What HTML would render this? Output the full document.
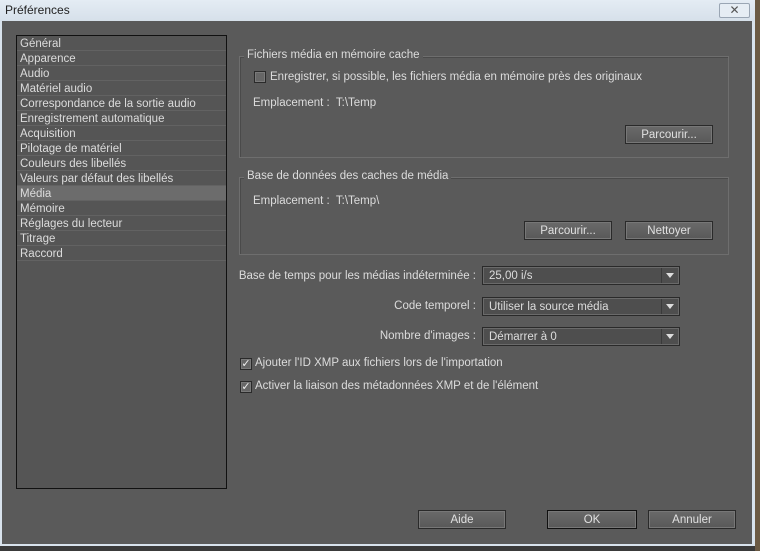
<!DOCTYPE html>
<html><head><meta charset="utf-8"><style>
*{box-sizing:border-box;margin:0;padding:0}
body{width:760px;height:551px;overflow:hidden;background:#3a3a3a;font-family:"Liberation Sans",sans-serif;font-size:11.5px;color:#dcdcdc;position:relative}
.abs{position:absolute}
#title{left:0;top:0;width:755px;height:21px;background:linear-gradient(#e4ecf4,#d6e0ea);color:#222;font-size:12px;padding:3px 0 0 5px}
#close{left:719px;top:3px;width:31px;height:15px;border:1px solid #9aa6b4;border-radius:2px;background:#e6edf4;text-align:center;font-size:12px;line-height:12px;color:#555}
#frame{left:0;top:21px;width:755px;height:525px;background:#d8e2ec}
#main{left:2px;top:21px;width:750px;height:523px;background:#5a5a5a}
#right{left:755px;top:0;width:5px;height:551px;background:#6b5a44}
#list{left:16px;top:35px;width:211px;height:454px;border:1px solid #111;background:#555}
.row{height:15px;line-height:16px;padding-left:3px;border-bottom:1px solid #626262;white-space:nowrap}
.sel{background:#6c6c6c}
.grp{border:1px solid #6e6e6e;box-shadow:inset 1px 1px 0 #4a4a4a}
.gt{background:#5a5a5a;padding:0 3px}
.btn{height:19px;border:1px solid #2a2a2a;background:linear-gradient(#6a6a6a,#585858);box-shadow:inset 0 0 0 1px #777;text-align:center;line-height:18px;color:#e0e0e0}
.dd{width:198px;height:19px;border:1px solid #2a2a2a;background:#4e4e4e;box-shadow:inset 0 0 0 1px #6a6a6a;line-height:18px;padding-left:6px}
.dd:after{content:"";position:absolute;right:0;top:1px;width:17px;height:15px;border-left:1px solid #3a3a3a}
.arr{position:absolute;right:5px;top:6px;border-left:4px solid transparent;border-right:4px solid transparent;border-top:5px solid #ddd}
.lbl{text-align:right;width:240px}
.cb{width:12px;height:12px;border:1px solid #2a2a2a;background:#666;box-shadow:inset 0 0 0 1px #7a7a7a;font-size:11px;line-height:10px;text-align:center;color:#eee}
</style></head><body>
<div class="abs" id="right"></div>
<div class="abs" id="frame"></div>
<div class="abs" id="title">Préférences</div>
<div class="abs" id="close">✕</div>
<div class="abs" id="main"></div>
<div class="abs" id="list">
<div class="row">Général</div><div class="row">Apparence</div><div class="row">Audio</div><div class="row">Matériel audio</div><div class="row">Correspondance de la sortie audio</div><div class="row">Enregistrement automatique</div><div class="row">Acquisition</div><div class="row">Pilotage de matériel</div><div class="row">Couleurs des libellés</div><div class="row">Valeurs par défaut des libellés</div><div class="row sel">Média</div><div class="row">Mémoire</div><div class="row">Réglages du lecteur</div><div class="row">Titrage</div><div class="row">Raccord</div>
</div>
<div class="abs grp" style="left:239px;top:56px;width:490px;height:102px"></div>
<div class="abs gt" style="left:244px;top:49px">Fichiers média en mémoire cache</div>
<div class="abs cb" style="left:254px;top:71px"></div>
<div class="abs" style="left:270px;top:71px">Enregistrer, si possible, les fichiers média en mémoire près des originaux</div>
<div class="abs" style="left:253px;top:97px">Emplacement :&nbsp; T:\Temp</div>
<div class="abs btn" style="left:625px;top:125px;width:88px">Parcourir...</div>
<div class="abs grp" style="left:239px;top:177px;width:490px;height:78px"></div>
<div class="abs gt" style="left:244px;top:170px">Base de données des caches de média</div>
<div class="abs" style="left:253px;top:195px">Emplacement :&nbsp; T:\Temp\</div>
<div class="abs btn" style="left:524px;top:221px;width:88px">Parcourir...</div>
<div class="abs btn" style="left:625px;top:221px;width:88px">Nettoyer</div>
<div class="abs lbl" style="left:236px;top:270px">Base de temps pour les médias indéterminée :</div>
<div class="abs dd" style="left:482px;top:266px">25,00 i/s<span class="arr"></span></div>
<div class="abs lbl" style="left:236px;top:300px">Code temporel :</div>
<div class="abs dd" style="left:482px;top:297px">Utiliser la source média<span class="arr"></span></div>
<div class="abs lbl" style="left:236px;top:330px">Nombre d'images :</div>
<div class="abs dd" style="left:482px;top:327px">Démarrer à 0<span class="arr"></span></div>
<div class="abs cb" style="left:240px;top:358px">✓</div>
<div class="abs" style="left:255px;top:357px">Ajouter l'ID XMP aux fichiers lors de l'importation</div>
<div class="abs cb" style="left:240px;top:381px">✓</div>
<div class="abs" style="left:255px;top:380px">Activer la liaison des métadonnées XMP et de l'élément</div>
<div class="abs btn" style="left:418px;top:510px;width:88px">Aide</div>
<div class="abs btn" style="left:547px;top:510px;width:90px;border-color:#111">OK</div>
<div class="abs btn" style="left:648px;top:510px;width:88px">Annuler</div>
</body></html>
